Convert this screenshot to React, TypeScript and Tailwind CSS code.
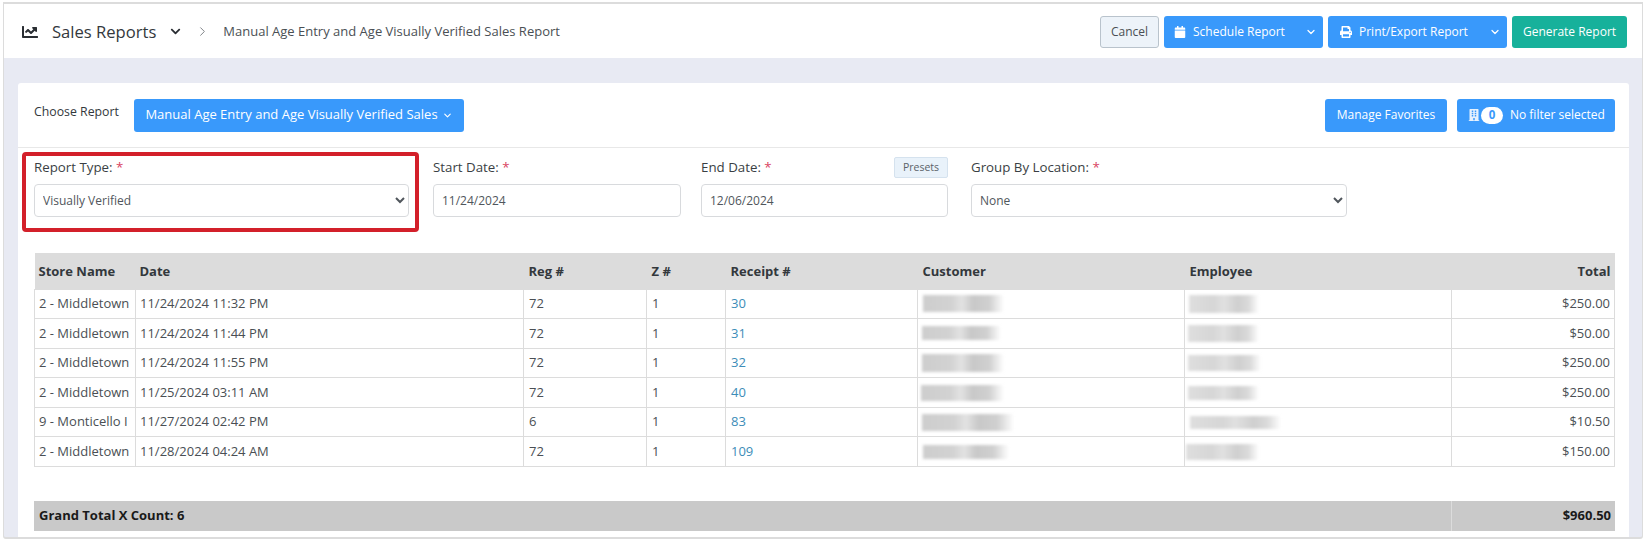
import { FaBuilding, FaCalendar, FaChartLine, FaChevronDown, FaPrint } from "react-icons/fa";
import { ChevronDown, ChevronRight } from "lucide-react";

const cBlur = "bg-[linear-gradient(90deg,#cdcdcd_0%,#d2d2d2_35%,#e2e2e2_48%,#c8c8c8_62%,#d0d0d0_82%,#ffffff_100%)]";
const eBlur = "bg-[linear-gradient(90deg,#dedede_0%,#d6d6d6_35%,#e0e0e0_50%,#cfcfcf_70%,#dadada_85%,#ffffff_100%)]";

const rows = [
  { store: "2 - Middletown", date: "11/24/2024 11:32 PM", reg: "72", receipt: "30", total: "$250.00", c: "w-[81px] h-[17px] ml-[5px]", e: "w-[70px] h-[18px] ml-[4px]" },
  { store: "2 - Middletown", date: "11/24/2024 11:44 PM", reg: "72", receipt: "31", total: "$50.00", c: "w-[79px] h-[14px] ml-[4px]", e: "w-[71px] h-[17px] ml-[3px]" },
  { store: "2 - Middletown", date: "11/24/2024 11:55 PM", reg: "72", receipt: "32", total: "$250.00", c: "w-[82px] h-[18px] ml-[4px]", e: "w-[73px] h-[16px] ml-[3px]" },
  { store: "2 - Middletown", date: "11/25/2024 03:11 AM", reg: "72", receipt: "40", total: "$250.00", c: "w-[83px] h-[16px] ml-[3px]", e: "w-[71px] h-[14px] ml-[3px]" },
  { store: "9 - Monticello I", date: "11/27/2024 02:42 PM", reg: "6", receipt: "83", total: "$10.50", c: "w-[92px] h-[17px] ml-[4px]", e: "w-[91px] h-[13px] ml-[5px]" },
  { store: "2 - Middletown", date: "11/28/2024 04:24 AM", reg: "72", receipt: "109", total: "$150.00", c: "w-[86px] h-[14px] ml-[5px]", e: "w-[73px] h-[16px] ml-[1px]" },
];

function Req({ children }: { children: string }) {
  return (
    <span className="text-[13.3px] leading-[18px] text-[#3a3f44]">
      {children} <span className="text-[#d9435f]">*</span>
    </span>
  );
}

const blueBtn = "flex items-center rounded-[3px] bg-[#3999fb] text-white";
const field = "h-[33px] w-full rounded-[4px] border border-[#d8dadd] bg-white text-[12px] text-[#50565c]";
const th = "h-[36px] bg-[#dcdcdc] pr-[4px] pt-[2px] text-left text-[13px] font-bold text-[#33383c]";
const cell = "h-[29.6px] border border-[#dcdcdc] pr-[4px] text-[13px]";
const td = cell + " text-[#4a4f54]";

export default function App() {
  return (
    <div className="h-[541px] w-[1647px] overflow-hidden bg-white pl-[3px] pr-[4px] pt-[2px] font-['Open_Sans',sans-serif]">
      <div className="flex h-[537px] flex-col overflow-hidden rounded-b-[3px] border-x border-b-2 border-t-2 border-[#dcdcdc] bg-[#e8eaf3]">
        <header className="flex h-[54px] shrink-0 items-center justify-between bg-white pl-[18px] pr-[15px] pt-[2px]">
          <div className="flex items-center">
            <FaChartLine className="text-[16px] text-[#2a2e33]" />
            <span className="ml-[14px] text-[16.6px] text-[#33383c]">Sales Reports</span>
            <FaChevronDown className="ml-[14px] text-[11px] text-[#2a2e33]" />
            <ChevronRight size={15} strokeWidth={1.5} className="ml-[14px] text-[#777c80]" />
            <span className="ml-[13px] text-[13px] text-[#4a4f54]">Manual Age Entry and Age Visually Verified Sales Report</span>
          </div>
          <div className="flex h-[32px] gap-[5px] text-[12px]">
            <button className="w-[59px] rounded-[3px] border border-[#b9c3cc] bg-[#edf3f9] text-[#4a4f54]">Cancel</button>
            <button className={blueBtn + " w-[159px] pl-[10px]"}>
              <FaCalendar className="text-[12px]" />
              <span className="ml-[7px]">Schedule Report</span>
              <ChevronDown size={12} strokeWidth={2.5} className="ml-auto mr-[6px]" />
            </button>
            <button className={blueBtn + " w-[179px] pl-[12px]"}>
              <FaPrint className="text-[12px]" />
              <span className="ml-[7px]">Print/Export Report</span>
              <ChevronDown size={12} strokeWidth={2.5} className="ml-auto mr-[6px]" />
            </button>
            <button className="w-[115px] rounded-[3px] bg-[#17b19b] text-white">Generate Report</button>
          </div>
        </header>
        <main className="ml-[14px] mr-[13px] mt-[25px] grow rounded-t-[3px] bg-white">
          <div className="flex h-[65px] items-center border-b border-[#e8e8e8] pl-[16px] pr-[14px]">
            <span className="mb-[6px] w-[85px] whitespace-nowrap text-[12.3px] text-[#33383c]">Choose Report</span>
            <button className={blueBtn + " ml-[15px] h-[33px] w-[330px] justify-center text-[13px]"}>
              Manual Age Entry and Age Visually Verified Sales
              <ChevronDown size={11} strokeWidth={2.5} className="ml-[4px]" />
            </button>
            <button className={blueBtn + " ml-auto h-[33px] w-[122px] justify-center text-[12px]"}>Manage Favorites</button>
            <button className={blueBtn + " ml-[10px] h-[33px] w-[158px] pl-[11px] text-[12px]"}>
              <FaBuilding className="text-[12px] text-[#e6f1fd]" />
              <span className="ml-[1px] flex h-[17px] w-[22px] items-center justify-center rounded-full bg-white text-[11.5px] font-bold text-[#3999fb]">0</span>
              <span className="ml-[7px]">No filter selected</span>
            </button>
          </div>
          <div className="flex pl-[16px] pt-[10px]">
            <div className="relative w-[375px]">
              <div className="absolute -left-[12px] -right-[10px] -top-[6px] h-[80px] rounded-[4px] border-4 border-[#d3202a]" />
              <div className="flex h-[26px] items-start"><Req>Report Type:</Req></div>
              <select className={field + " px-[4px]"} defaultValue="v"><option value="v">Visually Verified</option></select>
            </div>
            <div className="ml-[24px] w-[248px]">
              <div className="flex h-[26px] items-start"><Req>Start Date:</Req></div>
              <input className={field + " px-[8px]"} readOnly value="11/24/2024" />
            </div>
            <div className="ml-[20px] w-[247px]">
              <div className="flex h-[26px] items-start justify-between">
                <Req>End Date:</Req>
                <span className="-mt-[1px] flex h-[21px] w-[54px] items-center justify-center rounded-[2px] border border-[#d5e2ee] bg-[#e9f2fa] text-[10.5px] text-[#5b6268]">Presets</span>
              </div>
              <input className={field + " px-[8px]"} readOnly value="12/06/2024" />
            </div>
            <div className="ml-[23px] w-[376px]">
              <div className="flex h-[26px] items-start"><Req>Group By Location:</Req></div>
              <select className={field + " px-[4px]"} defaultValue="n"><option value="n">None</option></select>
            </div>
          </div>
          <div className="ml-[16px] mt-[36px] w-[1581px]">
            <table className="w-full table-fixed border-collapse">
              <colgroup>
                <col className="w-[101px]" /><col className="w-[388px]" /><col className="w-[123px]" /><col className="w-[79px]" />
                <col className="w-[192px]" /><col className="w-[267px]" /><col className="w-[267px]" /><col />
              </colgroup>
              <thead>
                <tr>
                  <th className={th + " pl-[4px]"}>Store Name</th>
                  <th className={th + " pl-[4px]"}>Date</th>
                  {["Reg #", "Z #", "Receipt #", "Customer", "Employee"].map((h) => (
                    <th key={h} className={th + " pl-[5px]"}>{h}</th>
                  ))}
                  <th className={th + " pl-[5px] text-right"}>Total</th>
                </tr>
              </thead>
              <tbody>
                {rows.map((r) => (
                  <tr key={r.receipt}>
                    <td className={td + " whitespace-nowrap pl-[4px]"}>{r.store}</td>
                    <td className={td + " pl-[4px]"}>{r.date}</td>
                    <td className={td + " pl-[5px]"}>{r.reg}</td>
                    <td className={td + " pl-[5px]"}>1</td>
                    <td className={cell + " pl-[5px] text-[#3d8db8]"}>{r.receipt}</td>
                    <td className="h-[29.6px] overflow-hidden border border-[#dcdcdc]"><div className={cBlur + " blur-[1.5px] " + r.c} /></td>
                    <td className="h-[29.6px] overflow-hidden border border-[#dcdcdc]"><div className={eBlur + " blur-[1.5px] " + r.e} /></td>
                    <td className={td + " text-right"}>{r.total}</td>
                  </tr>
                ))}
              </tbody>
            </table>
            <div className="mt-[34px] flex h-[30px] items-center bg-[#c9c9c9] text-[13px] font-bold text-[#1a1a1a]">
              <span className="flex-1 pl-[5px]">Grand Total X Count: 6</span>
              <span className="flex h-full w-[164px] items-center justify-end border-l border-[#dcdcdc] pr-[4px]">$960.50</span>
            </div>
          </div>
        </main>
      </div>
    </div>
  );
}
